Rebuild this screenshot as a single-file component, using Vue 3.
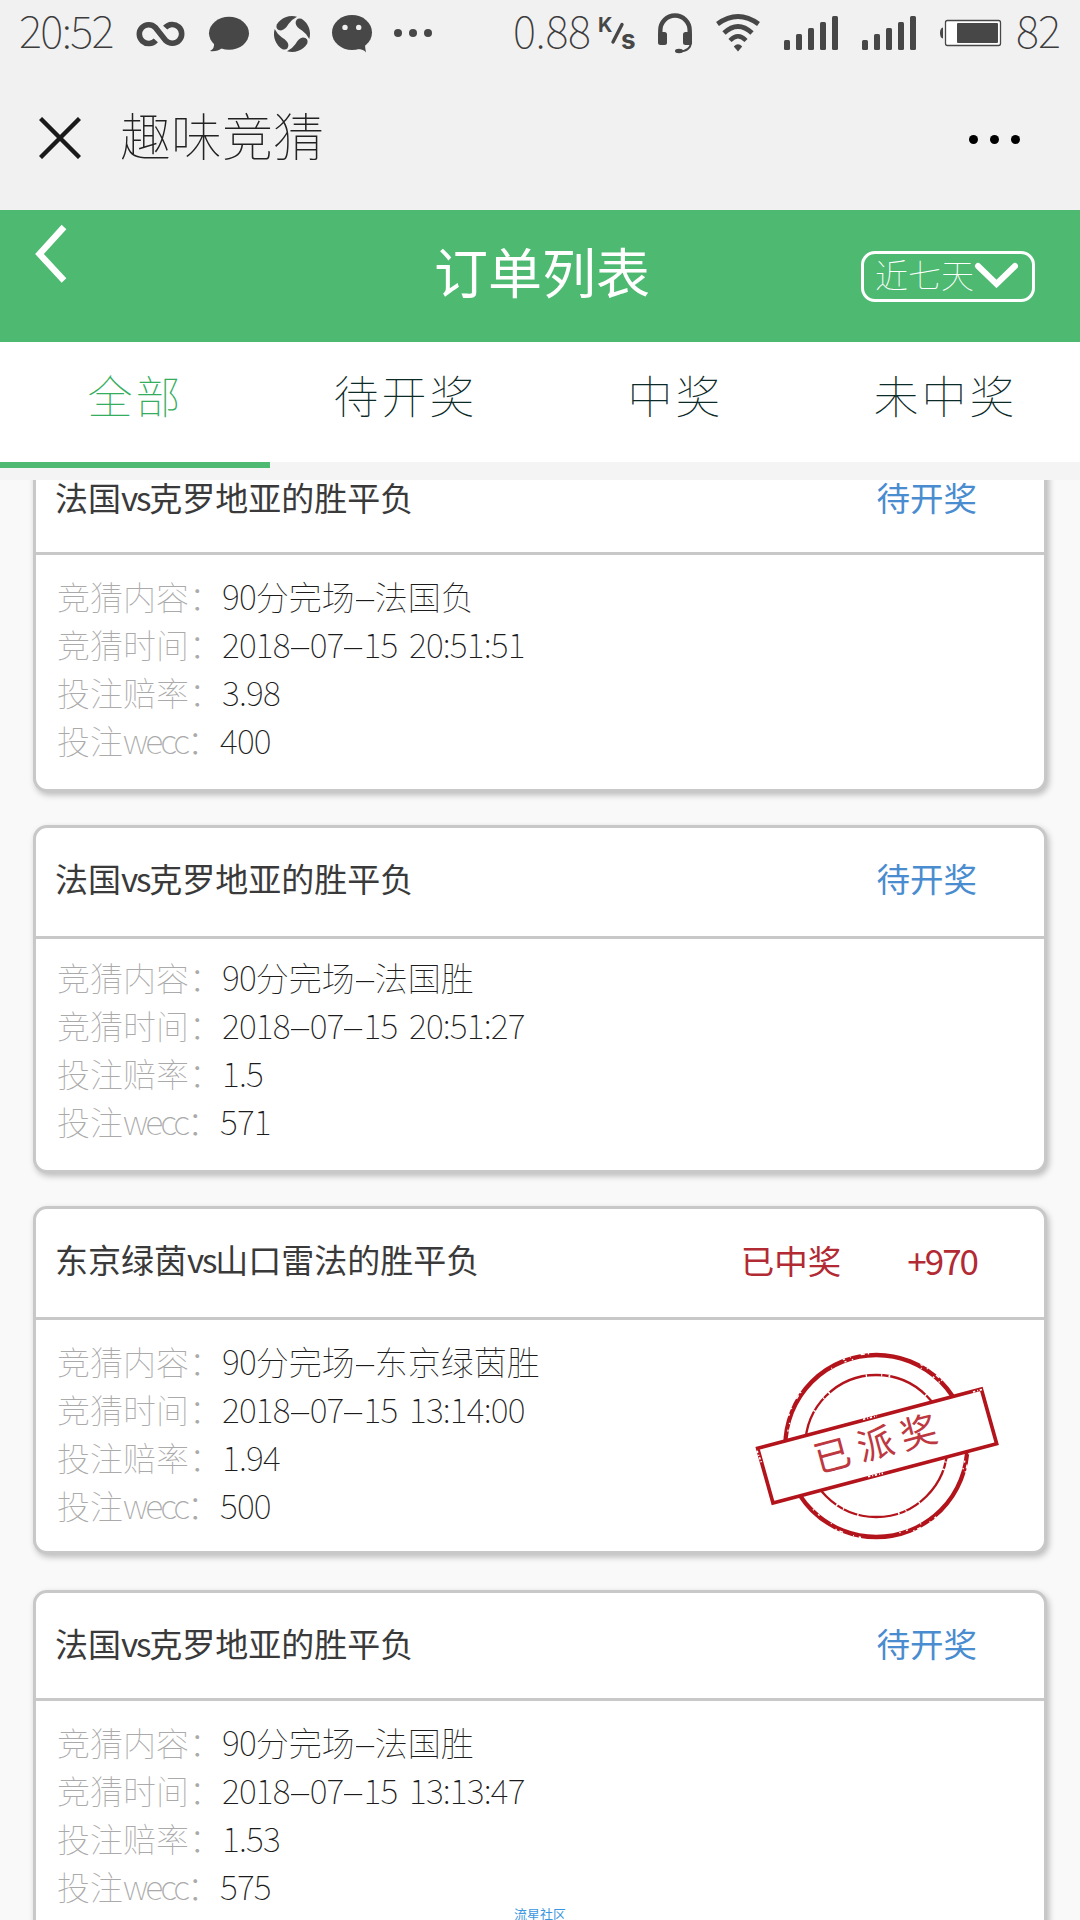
<template>
  <div class="page">
    <!-- 狀態列 -->
    <header class="status-bar">
      <span class="status-text time">20:52</span>
      <svg class="icons-left" width="305" height="66" viewBox="130 0 305 66">
        <path d="M155.8 40.3A9.4 9.4 0 1 1 155.3 27.4L165.7 40.6A9.4 9.4 0 1 0 165.2 27.7" fill="none" stroke="#474747" stroke-width="5.6" />
        <g fill="#474747">
          <ellipse cx="229" cy="33.3" rx="20" ry="16.5" />
          <path d="M214 43Q215 48 210 51Q217 52 222 48Z" />
          <g transform="translate(292 34)">
            <path
              v-for="angle in [0, 90, 180, 270]"
              :key="angle"
              :transform="`rotate(${angle})`"
              d="M-15.3 -9.5A18 18 0 0 1 5 -17.3Q-.5 -14.5 -3.5 -10Q-7 -4 -11 -3.6Q-16.8 -4 -15.3 -9.5Z"
            />
          </g>
          <ellipse cx="352" cy="32.5" rx="20" ry="17.5" />
          <path d="M357 49Q364 49 366 52.5Q365 48 365 44Z" />
          <circle cx="398" cy="33" r="4" />
          <circle cx="413" cy="33" r="4" />
          <circle cx="428" cy="33" r="4" />
        </g>
        <g fill="#f1f1f1">
          <circle cx="345" cy="27.4" r="2.7" />
          <circle cx="358.7" cy="27.4" r="2.7" />
        </g>
      </svg>
      <span class="status-text speed">0.88</span>
      <svg class="icons-right" width="412" height="66" viewBox="596 0 412 66">
        <g class="unit" fill="#474747">
          <text x="598" y="32" font-size="20">K</text>
          <text x="621" y="48.5" font-size="26">s</text>
        </g>
        <path d="M622 24.5L613 42" stroke="#474747" stroke-width="3.4" stroke-linecap="round" />
        <!-- 耳機 -->
        <path d="M660.3 36V30.5A14.7 15 0 0 1 689.7 30.5V36" fill="none" stroke="#474747" stroke-width="4.4" />
        <path d="M691 42Q690.5 51.5 679 51.5" fill="none" stroke="#474747" stroke-width="2" />
        <g fill="#474747">
          <rect x="658" y="32" width="9" height="13" rx="2.5" />
          <rect x="683" y="32" width="9" height="13" rx="2.5" />
          <ellipse cx="679" cy="51" rx="4" ry="2.2" />
        </g>
        <!-- WiFi -->
        <g fill="none" stroke="#474747" stroke-width="4.8">
          <path d="M717.5 24Q738 9 758.5 24" />
          <path d="M724 33Q738 20 752 33" />
          <path d="M730 40.5Q738 32 746 40.5" stroke-width="4.3" />
        </g>
        <path d="M733.8 46.5Q738 42 742.2 46.5L738 51.5Z" fill="#474747" />
        <!-- 訊號 -->
        <g v-for="left in [784, 862]" :key="left" fill="#474747">
          <rect
            v-for="n in 5"
            :key="n"
            :x="left + (n - 1) * 12"
            :y="46 - n * 6"
            width="6"
            :height="4 + n * 6"
            rx="1.5"
          />
        </g>
        <!-- 電池 -->
        <path d="M943 27.5Q940 28 940 33Q940 38 943 38.5Z" fill="#474747" />
        <rect x="945.5" y="20.5" width="55" height="25" rx="2" fill="#fff" stroke="#474747" stroke-width="1.3" />
        <rect x="957" y="23" width="41" height="20" rx="1" fill="#474747" />
      </svg>
      <span class="status-text battery">82</span>
    </header>

    <!-- 應用標題列 -->
    <div class="title-bar">
      <svg class="close" width="42" height="42" viewBox="0 0 42 42">
        <path d="M1.5 1.5L40.5 40.5M40.5 1.5L1.5 40.5" stroke="#1a1a1a" stroke-width="4.4" />
      </svg>
      <span class="app-title">趣味竞猜</span>
      <div class="more"><i></i><i></i><i></i></div>
    </div>

    <!-- 頁面標題 -->
    <div class="page-header">
      <svg class="back" width="32" height="60" viewBox="0 0 32 60">
        <path d="M29 3L4.5 30L29 56.5" fill="none" stroke="#fff" stroke-width="6.4" />
      </svg>
      <h1>订单列表</h1>
      <div class="range">
        <span>近七天</span>
        <svg width="44" height="26" viewBox="0 0 44 26">
          <path d="M4 4L22.5 22L41 4" fill="none" stroke="#fff" stroke-width="6" stroke-linecap="round" />
        </svg>
      </div>
    </div>

    <!-- 分頁標籤 -->
    <nav class="tabs">
      <div
        v-for="(tab, index) in tabs"
        :key="tab"
        class="tab"
        :class="{ 'tab-active': index === activeTab }"
        @click="activeTab = index"
      >
        {{ tab }}
      </div>
    </nav>

    <!-- 訂單列表 -->
    <main class="order-list">
      <section v-for="(order, index) in orders" :key="index" class="card" :class="order.layout">
        <div class="card-head">
          <span class="match">
            <span v-for="(part, i) in split(order.title)" :key="i" :class="part.type">{{ part.text }}</span>
          </span>
          <span class="state" :class="{ won: order.prize }">{{ order.state }}</span>
          <span v-if="order.prize" class="prize">{{ order.prize }}</span>
        </div>
        <div class="card-body">
          <div v-for="row in order.rows" :key="row[0]" class="row">
            <span class="label">
              <span v-for="(part, i) in split(row[0])" :key="i" :class="part.type">{{ part.text }}</span>：</span>
            <span class="value">
              <span v-for="(part, i) in split(row[1])" :key="i" :class="part.type">{{ part.text }}</span>
            </span>
          </div>
        </div>
        <!-- 已派獎印章 -->
        <svg v-if="order.prize" class="stamp" width="250" height="194" viewBox="40 60 750 582">
          <g fill="none" stroke="#b3141b">
            <circle cx="410" cy="348" r="273" stroke-width="13" />
            <circle cx="410" cy="348" r="213" stroke-width="7" />
          </g>
          <g fill="none" stroke="#fff" stroke-width="4">
            <circle cx="410" cy="348" r="278" stroke-dasharray="7 15 3 31 12 9 4 160" />
            <circle cx="410" cy="348" r="269" stroke-dasharray="3 41 6 17 4 210" />
            <circle cx="410" cy="348" r="213" stroke-width="8" stroke-dasharray="4 43 3 19 5 120" />
          </g>
          <path d="M54 355L725 177L771 341L100 519Z" fill="#fff" stroke="#b3141b" stroke-width="11" />
          <path d="M370 268L412 258M385 440L430 430M52 362L66 400M700 186L728 178" stroke="#fff" stroke-width="5" stroke-dasharray="7 6 3 5" />
          <text class="stamp-text" x="235" y="429" transform="rotate(-14.9 235 429)">已派奖</text>
        </svg>
      </section>
    </main>

    <span class="watermark">流星社区</span>
  </div>
</template>

<script setup>
import { ref } from 'vue'

const tabs = ['全部', '待开奖', '中奖', '未中奖']
const activeTab = ref(0)

const orders = [
  {
    title: '法国vs克罗地亚的胜平负',
    state: '待开奖',
    layout: 'short-head',
    rows: [
      ['竞猜内容', '90分完场-法国负'],
      ['竞猜时间', '2018-07-15 20:51:51'],
      ['投注赔率', '3.98'],
      ['投注wecc', '400']
    ]
  },
  {
    title: '法国vs克罗地亚的胜平负',
    state: '待开奖',
    layout: 'tight-body',
    rows: [
      ['竞猜内容', '90分完场-法国胜'],
      ['竞猜时间', '2018-07-15 20:51:27'],
      ['投注赔率', '1.5'],
      ['投注wecc', '571']
    ]
  },
  {
    title: '东京绿茵vs山口雷法的胜平负',
    state: '已中奖',
    prize: '+970',
    rows: [
      ['竞猜内容', '90分完场-东京绿茵胜'],
      ['竞猜时间', '2018-07-15 13:14:00'],
      ['投注赔率', '1.94'],
      ['投注wecc', '500']
    ]
  },
  {
    title: '法国vs克罗地亚的胜平负',
    state: '待开奖',
    layout: 'short-head last',
    rows: [
      ['竞猜内容', '90分完场-法国胜'],
      ['竞猜时间', '2018-07-15 13:13:47'],
      ['投注赔率', '1.53'],
      ['投注wecc', '575']
    ]
  }
]

// 將文字拆成中文、英數字與連字號，分別套用字距
const split = (text) => {
  return text.match(/-|[\x20-\x2c\x2e-\x7e]+|[^\x20-\x7e]+/g).map((part) => {
    if (part === '-') return { type: 'dash', text: part }
    return { type: part.charCodeAt(0) < 128 ? 'latin' : 'han', text: part }
  })
}
</script>

<style>
body {
  background: #f9f9f9;
}
</style>

<style scoped>
.page {
  position: relative;
  display: flex;
  flex-direction: column;
  width: 1080px;
  height: 1920px;
  overflow: hidden;
  background: #f9f9f9;
  font-family: 'Noto Sans CJK SC', sans-serif;
  font-weight: 400;
}

/* 狀態列 */
.status-bar {
  display: flex;
  flex: none;
  height: 66px;
  padding-left: 19px;
  background: #f1f1f1;
}

.status-text {
  color: #3c3c3c;
  font-size: 44px;
  font-weight: 100;
  line-height: 59px;
}

.time {
  width: 111px;
  letter-spacing: -1.6px;
}

.speed {
  width: 83px;
  margin-left: 78px;
  letter-spacing: -0.3px;
}

.battery {
  letter-spacing: -1px;
}

.icons-left,
.icons-right {
  flex: none;
}

.icons-right {
  margin-right: 8px;
}

.unit {
  font-family: Inter, sans-serif;
  font-weight: 700;
}

/* 應用標題列 */
.title-bar {
  display: flex;
  flex: none;
  align-items: center;
  height: 144px;
  padding: 0 60px 0 39px;
  background: #f1f1f1;
}

.app-title {
  margin: 0 auto 8px 39px;
  color: #222;
  font-size: 51px;
  font-weight: 100;
}

.more {
  display: flex;
  gap: 12px;
  margin-top: 2px;
}

.more i {
  width: 9px;
  height: 9px;
  border-radius: 50%;
  background: #000;
}

/* 頁面標題 */
.page-header {
  display: flex;
  flex: none;
  align-items: center;
  height: 132px;
  padding: 0 45px 0 35px;
  background: #4db971;
  color: #fff;
}

.back {
  margin-bottom: 45px;
}

h1 {
  margin: 0 auto 10px 367px;
  font-size: 54px;
  font-weight: 400;
  line-height: 60px;
}

.range {
  display: flex;
  align-items: center;
  box-sizing: border-box;
  width: 174px;
  height: 51px;
  padding-left: 11px;
  border: 3px solid #fff;
  border-radius: 14px;
}

.range span {
  margin-bottom: 4px;
  font-size: 33px;
  font-weight: 100;
  line-height: 42px;
}

.range svg {
  flex: none;
  margin: 0 0 3px 0;
}

/* 分頁標籤 */
.tabs {
  display: flex;
  flex: none;
  height: 138px;
  background: linear-gradient(#fff 120px, #f4f4f4 120px);
}

.tab {
  box-sizing: border-box;
  width: 270px;
  height: 126px;
  padding-left: 1px;
  color: #0c2a28;
  font-size: 45px;
  font-weight: 100;
  letter-spacing: 3px;
  line-height: 106px;
  text-align: center;
}

.tab-active {
  border-bottom: 6px solid #4db971;
  color: #35ad5e;
}

/* 訂單列表 */
.order-list {
  flex: 1;
  overflow: hidden;
  padding: 0 33px;
}

.card {
  position: relative;
  box-sizing: border-box;
  height: 348px;
  margin-bottom: 33px;
  border: 3px solid #c8c8c8;
  border-radius: 14px;
  background: #fff;
  box-shadow: 2px 3px 6px rgba(0, 0, 0, 0.25);
}

.card:first-child {
  margin-top: -36px;
}

.card.last {
  margin-top: 36px;
}

.card-head {
  display: flex;
  box-sizing: border-box;
  height: 111px;
  padding: 26px 67px 0 19px;
  border-bottom: 3px solid #c8c8c8;
  font-size: 33px;
  line-height: 48px;
}

.short-head .card-head {
  height: 108px;
}

.match {
  margin-right: auto;
  color: #3a3a3a;
}

.match .latin {
  letter-spacing: -2.2px;
}

.state {
  color: #4a8cd0;
  font-size: 33.5px;
}

.won {
  color: #b22a33;
}

.prize {
  margin-left: 66px;
  color: #b22a33;
  font-size: 35px;
  letter-spacing: -2px;
}

.won,
.prize {
  padding-top: 1px;
}

.card-body {
  padding: 17px 0 0 21px;
}

.tight-body .card-body {
  padding-top: 14px;
}

.row {
  display: flex;
  height: 48px;
  font-size: 33px;
  font-weight: 100;
  line-height: 48px;
  white-space: pre;
}

.label {
  color: #aaa;
}

.value {
  color: #1c1c1c;
}

.row .latin {
  font-size: 34px;
  letter-spacing: -0.8px;
  word-spacing: 5px;
}

.label .latin {
  letter-spacing: -3px;
}

.dash {
  display: inline-block;
  width: 20px;
  text-align: center;
  transform: scaleX(2.3);
}

/* 印章 */
.stamp {
  position: absolute;
  top: 141px;
  left: 717px;
}

.stamp-text {
  fill: #bd3840;
  font-size: 110px;
  letter-spacing: 24px;
}

.watermark {
  position: absolute;
  bottom: -4px;
  left: 514px;
  color: #3d96e0;
  font-size: 13px;
  line-height: 20px;
}
</style>
